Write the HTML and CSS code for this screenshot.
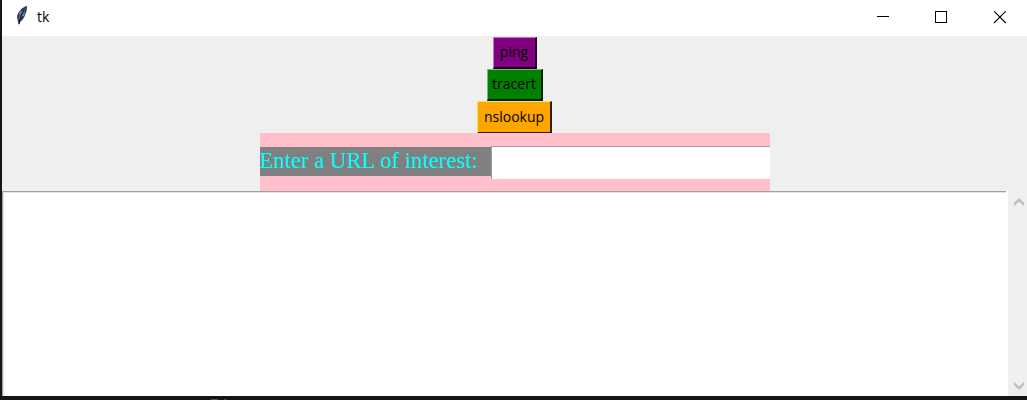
FILE: index.html
```html
<!DOCTYPE html>
<html lang="en">
<head>
<meta charset="utf-8">
<title>tk</title>
<link rel="stylesheet" href="styles.css">
</head>
<body>
<main class="window">
  <header class="titlebar">
    <svg class="feather" width="16" height="22" viewBox="0 0 16 22">
      <path d="M12 1C7 2 3 7 2 12L3 17L4 20L5 17C9 14 12 8 12 1Z" fill="#30333a"/>
      <path d="M10.5 3C7 5 4 9 3.5 15C7 13 10 8 10.5 3Z" fill="#4f83c4"/>
      <path d="M9.5 4C7 8 5 12 4 19" fill="none" stroke="#18202c" stroke-width="1.2"/>
      <path d="M6 6L4.5 9M10 8L8 11" stroke="#a9c5e6" stroke-width=".8"/>
    </svg>
    <span class="title">tk</span>
    <svg class="controls" width="130" height="16" viewBox="0 0 130 16" fill="none" stroke="#000">
      <path d="M0 5.5H12" shape-rendering="crispEdges"/>
      <rect x="58.5" y=".5" width="11" height="11" shape-rendering="crispEdges"/>
      <path d="M117 .2L128.8 12M128.8 .2L117 12" stroke-width="1.1"/>
    </svg>
  </header>
  <section class="commands">
    <button class="button ping">ping</button>
    <button class="button tracert">tracert</button>
    <button class="button nslookup">nslookup</button>
  </section>
  <section class="url-row">
    <label class="url-label" for="url">Enter a URL of interest:</label>
    <input class="url-input" id="url" type="text">
  </section>
  <section class="output">
    <div class="text-area"></div>
    <div class="scrollbar">
      <svg width="10" height="8" viewBox="0 0 10 8"><path d="M0 5L5 0L10 5V8L5 3.5L0 8Z" fill="#bdbdbd"/></svg>
      <svg width="10" height="8" viewBox="0 0 10 8"><path d="M0 0L5 4.5L10 0V3L5 8L0 3Z" fill="#bdbdbd"/></svg>
    </div>
  </section>
</main>
<footer class="desktop-edge">
  <svg width="20" height="3" viewBox="0 0 20 3"><path d="M1 0V3M14 0V3" stroke="#475264" stroke-width="2"/><path d="M2 .5H7M10 1.5H13" stroke="#555"/></svg>
</footer>
</body>
</html>
```
FILE: styles.css
```css
* { box-sizing: border-box; }
body {
  margin: 0;
  width: 1027px;
  height: 400px;
  overflow: hidden;
  background: #151417;
  font-family: "Open Sans", "Noto Sans", sans-serif;
}
.window {
  display: flex;
  flex-direction: column;
  height: 396px;
  margin-left: 2px;
  background: #efefef;
}
.titlebar {
  display: flex;
  align-items: flex-start;
  height: 36px;
  background: #fff;
}
.feather { margin: 5px 0 0 13px; }
.title {
  margin: 7px 0 0 6px;
  font-size: 14px;
  line-height: 20px;
  color: #000;
}
.controls { margin: 11px 20px 0 auto; }
.commands {
  display: flex;
  flex-direction: column;
  align-items: center;
  height: 97px;
  padding-top: 1px;
}
.button {
  flex: none;
  height: 32px;
  margin: 0;
  padding: 0 0 1px;
  border: 1px solid;
  border-right-width: 2px;
  border-bottom-width: 2px;
  font: 14px/20px "Open Sans", "Noto Sans", sans-serif;
  color: #000;
}
.ping {
  width: 44px;
  background: #800080;
  border-color: #bb78bb #260026 #260026 #bb78bb;
}
.tracert {
  width: 56px;
  background: #008000;
  border-color: #75b875 #002600 #002600 #75b875;
}
.nslookup {
  width: 75px;
  height: 33px;
  background: #ffa500;
  border-color: #ffe15e #302000 #302000 #ffe15e;
}
.url-row {
  display: flex;
  align-items: center;
  width: 510px;
  height: 58px;
  margin-left: 257.5px;
  background: #ffc0cb;
}
.url-label {
  width: 231px;
  height: 29px;
  margin-top: -1px;
  background: #808080;
  color: #00ffff;
  font: 22.7px/27px "Liberation Serif", serif;
  white-space: nowrap;
}
.url-input {
  width: 279px;
  height: 33px;
  margin: 0;
  padding: 2px;
  border: 0;
  border-top: 1px solid #a0a0a0;
  border-left: 1px solid #a0a0a0;
  outline: 0;
  background: #fff;
}
.output {
  display: flex;
  height: 205px;
}
.text-area {
  width: 1004px;
  border-top: 1px solid #a0a0a0;
  border-left: 1px solid #a0a0a0;
  box-shadow: inset 1px 1px #e3e3e3;
  background: #fff;
}
.scrollbar {
  display: flex;
  flex-direction: column;
  align-items: center;
  justify-content: space-between;
  width: 21px;
  padding: 7px 0 6px 2px;
  border-left: 2px solid #fff;
}
.desktop-edge {
  height: 4px;
  padding: 0 0 0 211px;
  line-height: 0;
}
```
